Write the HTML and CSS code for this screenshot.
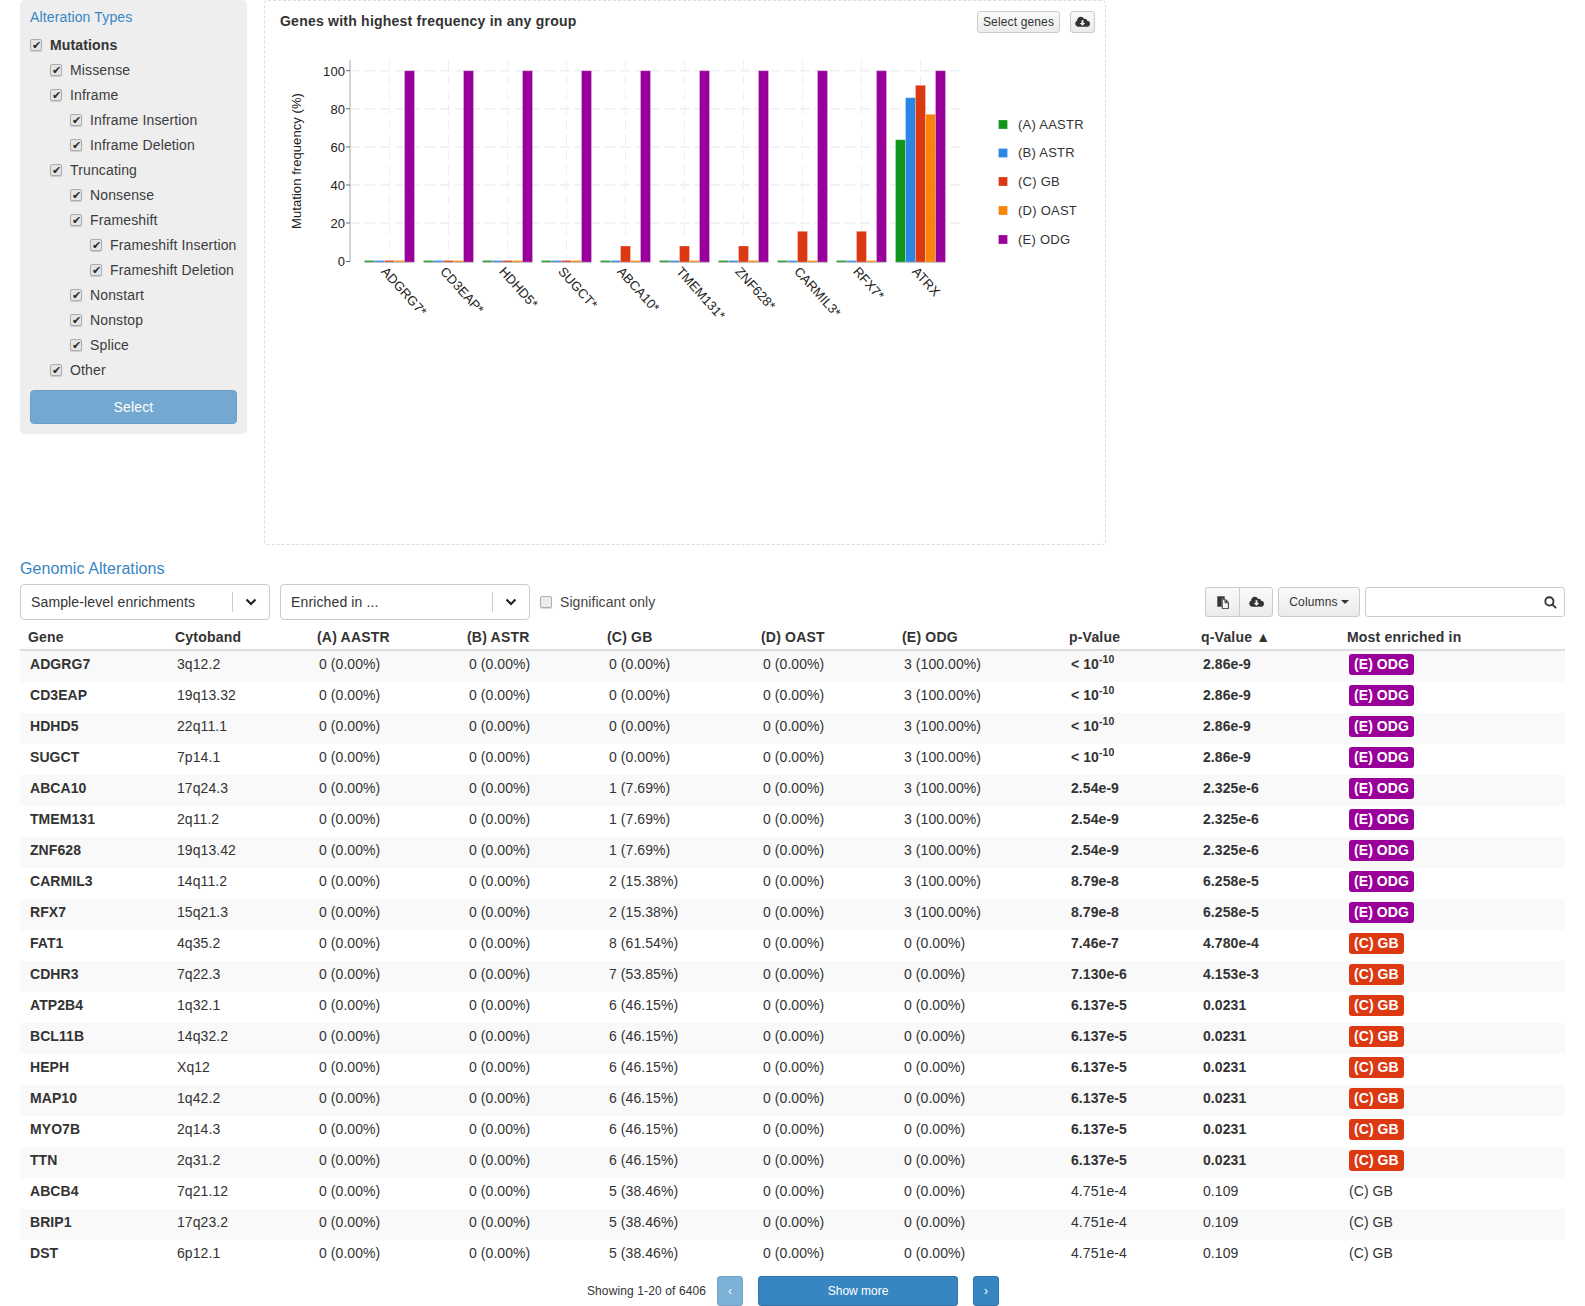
FILE: index.html
```html
<!DOCTYPE html>
<html lang="en">
<head>
    <meta charset="UTF-8">
    <title>Genomic Alterations</title>
    <link rel="stylesheet" href="styles.css">
</head>
<body>
    <div class="top">
        <div class="types">
            <div class="types-title">Alteration Types</div>
            <label class="type bold"><input type="checkbox" checked>Mutations</label>
            <label class="type lvl1"><input type="checkbox" checked>Missense</label>
            <label class="type lvl1"><input type="checkbox" checked>Inframe</label>
            <label class="type lvl2"><input type="checkbox" checked>Inframe Insertion</label>
            <label class="type lvl2"><input type="checkbox" checked>Inframe Deletion</label>
            <label class="type lvl1"><input type="checkbox" checked>Truncating</label>
            <label class="type lvl2"><input type="checkbox" checked>Nonsense</label>
            <label class="type lvl2"><input type="checkbox" checked>Frameshift</label>
            <label class="type lvl3"><input type="checkbox" checked>Frameshift Insertion</label>
            <label class="type lvl3"><input type="checkbox" checked>Frameshift Deletion</label>
            <label class="type lvl2"><input type="checkbox" checked>Nonstart</label>
            <label class="type lvl2"><input type="checkbox" checked>Nonstop</label>
            <label class="type lvl2"><input type="checkbox" checked>Splice</label>
            <label class="type lvl1"><input type="checkbox" checked>Other</label>
            <button class="select-btn">Select</button>
        </div>

        <div class="panel">
            <div class="panel-head">
                <h3>Genes with highest frequency in any group</h3>
                <div class="panel-tools">
                    <button class="btn btn-xs">Select genes</button>
                    <button class="btn btn-xs btn-icon">
                        <svg class="icon" viewBox="0 0 16 12"><path d="M6.2 0.5a4 4 0 0 1 3.6 2.2a2.4 2.4 0 0 1 3.1 1.9a3.2 3.2 0 0 1-0.4 6.4H3.4A3.3 3.3 0 0 1 2.2 4.7A4 4 0 0 1 6.2 0.5z"/><path class="icon-cut" d="M7 4h2v3h2l-3 3l-3-3h2z"/></svg>
                    </button>
                </div>
            </div>

            <!-- viewBox is in page coordinates so numbers can be read off the screenshot -->
            <svg class="chart" viewBox="265 44 838 300" width="838" height="300">
                <g class="grid">
                    <path d="M350 70.7H960M350 108.8H960M350 146.9H960M350 185H960M350 223H960"/>
                </g>
                <g class="grid-v">
                    <path d="M389.5 60V261M448.5 60V261M507.5 60V261M566.5 60V261M625.5 60V261M684.5 60V261M743.5 60V261M802.5 60V261M861.5 60V261M920.5 60V261"/>
                </g>
                <path class="axis" d="M350 60V262"/>
                <path class="tick" d="M346 70.7H350M346 108.8H350M346 146.9H350M346 185H350M346 223H350M346 261.5H350"/>
                <g class="y-labels">
                    <text x="345" y="75.5">100</text>
                    <text x="345" y="113.5">80</text>
                    <text x="345" y="151.5">60</text>
                    <text x="345" y="189.5">40</text>
                    <text x="345" y="227.5">20</text>
                    <text x="345" y="266">0</text>
                </g>
                <text class="y-title" transform="translate(300.5 161) rotate(-90)">Mutation frequency (%)</text>

                <path class="baseline" d="M364.5 262.2h50M423.5 262.2h50M482.5 262.2h50M541.5 262.2h50M600.5 262.2h50M659.5 262.2h50M718.5 262.2h50M777.5 262.2h50M836.5 262.2h50M895.5 262.2h50"/>

                <g transform="translate(364.5 0)"><rect class="a" y="260.5" width="10" height="1.5"/><rect class="b" x="10" y="260.5" width="10" height="1.5"/><rect class="c" x="20" y="260.5" width="10" height="1.5"/><rect class="d" x="30" y="260.5" width="10" height="1.5"/><rect class="e" x="40" y="70.7" width="10" height="191.3"/></g>
                <g transform="translate(423.5 0)"><rect class="a" y="260.5" width="10" height="1.5"/><rect class="b" x="10" y="260.5" width="10" height="1.5"/><rect class="c" x="20" y="260.5" width="10" height="1.5"/><rect class="d" x="30" y="260.5" width="10" height="1.5"/><rect class="e" x="40" y="70.7" width="10" height="191.3"/></g>
                <g transform="translate(482.5 0)"><rect class="a" y="260.5" width="10" height="1.5"/><rect class="b" x="10" y="260.5" width="10" height="1.5"/><rect class="c" x="20" y="260.5" width="10" height="1.5"/><rect class="d" x="30" y="260.5" width="10" height="1.5"/><rect class="e" x="40" y="70.7" width="10" height="191.3"/></g>
                <g transform="translate(541.5 0)"><rect class="a" y="260.5" width="10" height="1.5"/><rect class="b" x="10" y="260.5" width="10" height="1.5"/><rect class="c" x="20" y="260.5" width="10" height="1.5"/><rect class="d" x="30" y="260.5" width="10" height="1.5"/><rect class="e" x="40" y="70.7" width="10" height="191.3"/></g>
                <g transform="translate(600.5 0)"><rect class="a" y="260.5" width="10" height="1.5"/><rect class="b" x="10" y="260.5" width="10" height="1.5"/><rect class="c" x="20" y="246" width="10" height="16"/><rect class="d" x="30" y="260.5" width="10" height="1.5"/><rect class="e" x="40" y="70.7" width="10" height="191.3"/></g>
                <g transform="translate(659.5 0)"><rect class="a" y="260.5" width="10" height="1.5"/><rect class="b" x="10" y="260.5" width="10" height="1.5"/><rect class="c" x="20" y="246" width="10" height="16"/><rect class="d" x="30" y="260.5" width="10" height="1.5"/><rect class="e" x="40" y="70.7" width="10" height="191.3"/></g>
                <g transform="translate(718.5 0)"><rect class="a" y="260.5" width="10" height="1.5"/><rect class="b" x="10" y="260.5" width="10" height="1.5"/><rect class="c" x="20" y="246" width="10" height="16"/><rect class="d" x="30" y="260.5" width="10" height="1.5"/><rect class="e" x="40" y="70.7" width="10" height="191.3"/></g>
                <g transform="translate(777.5 0)"><rect class="a" y="260.5" width="10" height="1.5"/><rect class="b" x="10" y="260.5" width="10" height="1.5"/><rect class="c" x="20" y="231.3" width="10" height="30.7"/><rect class="d" x="30" y="260.5" width="10" height="1.5"/><rect class="e" x="40" y="70.7" width="10" height="191.3"/></g>
                <g transform="translate(836.5 0)"><rect class="a" y="260.5" width="10" height="1.5"/><rect class="b" x="10" y="260.5" width="10" height="1.5"/><rect class="c" x="20" y="231.3" width="10" height="30.7"/><rect class="d" x="30" y="260.5" width="10" height="1.5"/><rect class="e" x="40" y="70.7" width="10" height="191.3"/></g>
                <g transform="translate(895.5 0)"><rect class="a" y="139.7" width="10" height="122.3"/><rect class="b" x="10" y="97.7" width="10" height="164.3"/><rect class="c" x="20" y="85.3" width="10" height="176.7"/><rect class="d" x="30" y="114.3" width="10" height="147.7"/><rect class="e" x="40" y="70.7" width="10" height="191.3"/></g>

                <g class="x-labels">
                    <text transform="translate(380.5 272) rotate(48)">ADGRG7*</text>
                    <text transform="translate(439.5 272) rotate(48)">CD3EAP*</text>
                    <text transform="translate(498.5 272) rotate(48)">HDHD5*</text>
                    <text transform="translate(557.5 272) rotate(48)">SUGCT*</text>
                    <text transform="translate(616.5 272) rotate(48)">ABCA10*</text>
                    <text transform="translate(675.5 272) rotate(48)">TMEM131*</text>
                    <text transform="translate(734.5 272) rotate(48)">ZNF628*</text>
                    <text transform="translate(793.5 272) rotate(48)">CARMIL3*</text>
                    <text transform="translate(852.5 272) rotate(48)">RFX7*</text>
                    <text transform="translate(911.5 272) rotate(48)">ATRX</text>
                </g>

                <g class="legend">
                    <rect class="a" x="998.5" y="120" width="9" height="9"/><text x="1018" y="129">(A) AASTR</text>
                    <rect class="b" x="998.5" y="148.5" width="9" height="9"/><text x="1018" y="157">(B) ASTR</text>
                    <rect class="c" x="998.5" y="177" width="9" height="9"/><text x="1018" y="186">(C) GB</text>
                    <rect class="d" x="998.5" y="206" width="9" height="9"/><text x="1018" y="215">(D) OAST</text>
                    <rect class="e" x="998.5" y="235" width="9" height="9"/><text x="1018" y="244">(E) ODG</text>
                </g>
            </svg>
        </div>
    </div>

    <h2 class="section-title">Genomic Alterations</h2>

    <div class="toolbar">
        <div class="select-box">
            <span class="select-text">Sample-level enrichments</span>
            <span class="select-sep"></span>
            <svg class="chevron" viewBox="0 0 12 8"><path d="M1.5 1.5L6 6l4.5-4.5"/></svg>
        </div>
        <div class="select-box">
            <span class="select-text">Enriched in ...</span>
            <span class="select-sep"></span>
            <svg class="chevron" viewBox="0 0 12 8"><path d="M1.5 1.5L6 6l4.5-4.5"/></svg>
        </div>
        <label class="sig-only"><input type="checkbox">Significant only</label>

        <div class="table-tools">
            <div class="btn-group">
                <button class="btn btn-sm">
                    <svg class="icon-copy" viewBox="0 0 12 13"><path d="M0.5 0.5H7.5V2.5H4.5V10.5H0.5z"/><path d="M5.2 3.3H8V6.7H11.4V12.7H5.2z"/><path d="M8.9 3.4L11.3 5.8H8.9z"/></svg>
                </button>
                <button class="btn btn-sm">
                    <svg class="icon" viewBox="0 0 16 12"><path d="M6.2 0.5a4 4 0 0 1 3.6 2.2a2.4 2.4 0 0 1 3.1 1.9a3.2 3.2 0 0 1-0.4 6.4H3.4A3.3 3.3 0 0 1 2.2 4.7A4 4 0 0 1 6.2 0.5z"/><path class="icon-cut" d="M7 4h2v3h2l-3 3l-3-3h2z"/></svg>
                </button>
            </div>
            <button class="btn btn-sm btn-columns">Columns <span class="caret"></span></button>
            <div class="search">
                <input type="text">
                <svg class="search-icon" viewBox="0 0 14 14"><circle cx="5.8" cy="5.8" r="4.4"/><path d="M9 9l4 4"/></svg>
            </div>
        </div>
    </div>

    <table class="data">
        <colgroup>
            <col class="w-gene"><col class="w-cyto"><col class="w-a"><col class="w-b"><col class="w-c"><col class="w-d"><col class="w-e"><col class="w-p"><col class="w-q"><col class="w-most">
        </colgroup>
        <thead>
            <tr><th>Gene</th><th>Cytoband</th><th>(A) AASTR</th><th>(B) ASTR</th><th>(C) GB</th><th>(D) OAST</th><th>(E) ODG</th><th>p-Value</th><th>q-Value &#9650;</th><th>Most enriched in</th></tr>
        </thead>
        <tbody>
            <tr><td class="b">ADGRG7</td><td>3q12.2</td><td>0 (0.00%)</td><td>0 (0.00%)</td><td>0 (0.00%)</td><td>0 (0.00%)</td><td>3 (100.00%)</td><td class="b">&lt; 10<sup>-10</sup></td><td class="b">2.86e-9</td><td><span class="tag odg">(E) ODG</span></td></tr>
            <tr><td class="b">CD3EAP</td><td>19q13.32</td><td>0 (0.00%)</td><td>0 (0.00%)</td><td>0 (0.00%)</td><td>0 (0.00%)</td><td>3 (100.00%)</td><td class="b">&lt; 10<sup>-10</sup></td><td class="b">2.86e-9</td><td><span class="tag odg">(E) ODG</span></td></tr>
            <tr><td class="b">HDHD5</td><td>22q11.1</td><td>0 (0.00%)</td><td>0 (0.00%)</td><td>0 (0.00%)</td><td>0 (0.00%)</td><td>3 (100.00%)</td><td class="b">&lt; 10<sup>-10</sup></td><td class="b">2.86e-9</td><td><span class="tag odg">(E) ODG</span></td></tr>
            <tr><td class="b">SUGCT</td><td>7p14.1</td><td>0 (0.00%)</td><td>0 (0.00%)</td><td>0 (0.00%)</td><td>0 (0.00%)</td><td>3 (100.00%)</td><td class="b">&lt; 10<sup>-10</sup></td><td class="b">2.86e-9</td><td><span class="tag odg">(E) ODG</span></td></tr>
            <tr><td class="b">ABCA10</td><td>17q24.3</td><td>0 (0.00%)</td><td>0 (0.00%)</td><td>1 (7.69%)</td><td>0 (0.00%)</td><td>3 (100.00%)</td><td class="b">2.54e-9</td><td class="b">2.325e-6</td><td><span class="tag odg">(E) ODG</span></td></tr>
            <tr><td class="b">TMEM131</td><td>2q11.2</td><td>0 (0.00%)</td><td>0 (0.00%)</td><td>1 (7.69%)</td><td>0 (0.00%)</td><td>3 (100.00%)</td><td class="b">2.54e-9</td><td class="b">2.325e-6</td><td><span class="tag odg">(E) ODG</span></td></tr>
            <tr><td class="b">ZNF628</td><td>19q13.42</td><td>0 (0.00%)</td><td>0 (0.00%)</td><td>1 (7.69%)</td><td>0 (0.00%)</td><td>3 (100.00%)</td><td class="b">2.54e-9</td><td class="b">2.325e-6</td><td><span class="tag odg">(E) ODG</span></td></tr>
            <tr><td class="b">CARMIL3</td><td>14q11.2</td><td>0 (0.00%)</td><td>0 (0.00%)</td><td>2 (15.38%)</td><td>0 (0.00%)</td><td>3 (100.00%)</td><td class="b">8.79e-8</td><td class="b">6.258e-5</td><td><span class="tag odg">(E) ODG</span></td></tr>
            <tr><td class="b">RFX7</td><td>15q21.3</td><td>0 (0.00%)</td><td>0 (0.00%)</td><td>2 (15.38%)</td><td>0 (0.00%)</td><td>3 (100.00%)</td><td class="b">8.79e-8</td><td class="b">6.258e-5</td><td><span class="tag odg">(E) ODG</span></td></tr>
            <tr><td class="b">FAT1</td><td>4q35.2</td><td>0 (0.00%)</td><td>0 (0.00%)</td><td>8 (61.54%)</td><td>0 (0.00%)</td><td>0 (0.00%)</td><td class="b">7.46e-7</td><td class="b">4.780e-4</td><td><span class="tag gb">(C) GB</span></td></tr>
            <tr><td class="b">CDHR3</td><td>7q22.3</td><td>0 (0.00%)</td><td>0 (0.00%)</td><td>7 (53.85%)</td><td>0 (0.00%)</td><td>0 (0.00%)</td><td class="b">7.130e-6</td><td class="b">4.153e-3</td><td><span class="tag gb">(C) GB</span></td></tr>
            <tr><td class="b">ATP2B4</td><td>1q32.1</td><td>0 (0.00%)</td><td>0 (0.00%)</td><td>6 (46.15%)</td><td>0 (0.00%)</td><td>0 (0.00%)</td><td class="b">6.137e-5</td><td class="b">0.0231</td><td><span class="tag gb">(C) GB</span></td></tr>
            <tr><td class="b">BCL11B</td><td>14q32.2</td><td>0 (0.00%)</td><td>0 (0.00%)</td><td>6 (46.15%)</td><td>0 (0.00%)</td><td>0 (0.00%)</td><td class="b">6.137e-5</td><td class="b">0.0231</td><td><span class="tag gb">(C) GB</span></td></tr>
            <tr><td class="b">HEPH</td><td>Xq12</td><td>0 (0.00%)</td><td>0 (0.00%)</td><td>6 (46.15%)</td><td>0 (0.00%)</td><td>0 (0.00%)</td><td class="b">6.137e-5</td><td class="b">0.0231</td><td><span class="tag gb">(C) GB</span></td></tr>
            <tr><td class="b">MAP10</td><td>1q42.2</td><td>0 (0.00%)</td><td>0 (0.00%)</td><td>6 (46.15%)</td><td>0 (0.00%)</td><td>0 (0.00%)</td><td class="b">6.137e-5</td><td class="b">0.0231</td><td><span class="tag gb">(C) GB</span></td></tr>
            <tr><td class="b">MYO7B</td><td>2q14.3</td><td>0 (0.00%)</td><td>0 (0.00%)</td><td>6 (46.15%)</td><td>0 (0.00%)</td><td>0 (0.00%)</td><td class="b">6.137e-5</td><td class="b">0.0231</td><td><span class="tag gb">(C) GB</span></td></tr>
            <tr><td class="b">TTN</td><td>2q31.2</td><td>0 (0.00%)</td><td>0 (0.00%)</td><td>6 (46.15%)</td><td>0 (0.00%)</td><td>0 (0.00%)</td><td class="b">6.137e-5</td><td class="b">0.0231</td><td><span class="tag gb">(C) GB</span></td></tr>
            <tr><td class="b">ABCB4</td><td>7q21.12</td><td>0 (0.00%)</td><td>0 (0.00%)</td><td>5 (38.46%)</td><td>0 (0.00%)</td><td>0 (0.00%)</td><td>4.751e-4</td><td>0.109</td><td>(C) GB</td></tr>
            <tr><td class="b">BRIP1</td><td>17q23.2</td><td>0 (0.00%)</td><td>0 (0.00%)</td><td>5 (38.46%)</td><td>0 (0.00%)</td><td>0 (0.00%)</td><td>4.751e-4</td><td>0.109</td><td>(C) GB</td></tr>
            <tr><td class="b">DST</td><td>6p12.1</td><td>0 (0.00%)</td><td>0 (0.00%)</td><td>5 (38.46%)</td><td>0 (0.00%)</td><td>0 (0.00%)</td><td>4.751e-4</td><td>0.109</td><td>(C) GB</td></tr>
        </tbody>
    </table>

    <div class="pager">
        <span class="pager-text">Showing 1-20 of 6406</span>
        <button class="page-btn off">&#8249;</button>
        <button class="page-btn more">Show more</button>
        <button class="page-btn">&#8250;</button>
    </div>
</body>
</html>
```

FILE: styles.css
```css
html, body {
    margin: 0;
    padding: 0;
}
body {
    width: 1545px;
    height: 1306px;
    padding-left: 20px;
    overflow: hidden;
    font-family: "Liberation Sans", Arial, sans-serif;
    font-size: 14px;
    letter-spacing: .07px;
    color: #333;
    background-color: #fff;
}
.top {
    display: flex;
    gap: 17px;
    height: 545px;
}

/* alteration types */
.types {
    width: 207px;
    height: 434px;
    padding: 0 10px;
    background-color: #eee;
    border-radius: 5px;
    letter-spacing: .14px;
}
.types-title {
    height: 32px;
    line-height: 35px;
    color: #3786c2;
    font-size: 14px;
}
.type {
    display: flex;
    align-items: center;
    height: 25px;
    color: #3c3c3c;
}
.type.bold {
    font-weight: bold;
    color: #333;
}
.lvl1 { padding-left: 20px; }
.lvl2 { padding-left: 40px; }
.lvl3 { padding-left: 60px; }
input[type="checkbox"] {
    appearance: none;
    position: relative;
    flex: none;
    width: 12px;
    height: 12px;
    margin: 0 8px 0 0;
    border: 1px solid #adadad;
    border-radius: 2px;
    background-color: #e4e4e4;
    box-shadow: 0 1px 1px rgba(0,0,0,.15);
}
input[type="checkbox"]:not(:checked) {
    background-color: #ececec;
}
input[type="checkbox"]:checked::after {
    content: "\2714";
    position: absolute;
    left: 1px;
    top: -1px;
    font: bold 11px/13px "DejaVu Sans", sans-serif;
    color: #2a2a2a;
}
.select-btn {
    display: block;
    width: 207px;
    height: 34px;
    margin-top: 8px;
    border: 1px solid #6a9fc8;
    border-radius: 4px;
    background-color: #74a8d1;
    color: #fff;
    font-family: inherit;
    font-size: 14px;
    letter-spacing: .14px;
}

/* chart panel */
.panel {
    width: 840px;
    height: 543px;
    border: 1px dashed #ddd;
    border-radius: 4px;
}
.panel-head {
    display: flex;
    justify-content: space-between;
    height: 43px;
    padding: 10px 10px 0 15px;
    box-sizing: border-box;
}
.panel-head h3 {
    margin: 0;
    font-size: 14px;
    line-height: 20px;
    letter-spacing: .23px;
}
.panel-tools {
    display: flex;
    gap: 10px;
}
.chart {
    display: block;
}
.grid path {
    fill: none;
    stroke: #eef0f4;
    stroke-width: 1.5;
    stroke-dasharray: 10 5;
}
.grid-v path {
    fill: none;
    stroke: #eef0f4;
    stroke-dasharray: 10 5;
}
.axis {
    stroke: #d4d4d4;
    stroke-width: 2;
}
.tick {
    stroke: #666;
}
.baseline {
    stroke: #999;
    fill: none;
}
.chart text {
    font-size: 13px;
    fill: #222;
}
.legend text {
    letter-spacing: .25px;
    fill: #333;
}
.y-labels text {
    text-anchor: end;
}
.y-title {
    text-anchor: middle;
    fill: #333;
}
.chart rect {
    stroke-width: 1;
    stroke-opacity: .25;
    stroke: #fff;
}
rect.a { fill: #109618; }
rect.b { fill: #2986e2; }
rect.c { fill: #dc3912; }
rect.d { fill: #f88508; }
rect.e { fill: #990099; }

/* buttons */
.btn {
    border: 1px solid #ccc;
    border-radius: 3px;
    background: linear-gradient(#fafafa, #ebebeb);
    color: #333;
    font-family: inherit;
    padding: 0;
    display: flex;
    align-items: center;
    justify-content: center;
    letter-spacing: .15px;
}
.btn-xs {
    height: 22px;
    width: 83px;
    font-size: 12px;
}
.btn-icon {
    width: 25px;
}
.btn-sm {
    height: 30px;
    width: 34px;
    font-size: 12px;
}
.icon {
    width: 15px;
    height: 12px;
    fill: #333;
}
.icon-copy {
    width: 12px;
    height: 13px;
    fill: #333;
    stroke: #333;
    stroke-width: .4;
}
.icon-copy path:nth-child(2) {
    fill: #f4f4f4;
    stroke-width: 1;
}
.icon-cut {
    fill: #f3f3f3;
}

/* table toolbar */
.section-title {
    margin: 14px 0 0;
    font-size: 16px;
    font-weight: normal;
    line-height: 19px;
    color: #3786c2;
}
.toolbar {
    display: flex;
    align-items: center;
    gap: 10px;
    height: 36px;
    margin-top: 6px;
}
.select-box {
    display: flex;
    align-items: center;
    width: 248px;
    height: 34px;
    border: 1px solid #ccc;
    border-radius: 4px;
    letter-spacing: .13px;
}
.select-text {
    flex: 1;
    padding-left: 10px;
}
.select-sep {
    width: 1px;
    height: 20px;
    background-color: #ccc;
}
.chevron {
    width: 12px;
    height: 8px;
    margin: 0 12px;
    fill: none;
    stroke: #222;
    stroke-width: 2.2;
}
.sig-only {
    display: flex;
    align-items: center;
    color: #444;
}
.table-tools {
    display: flex;
    gap: 5px;
    margin-left: auto;
}
.btn-group {
    display: flex;
}
.btn-group .btn:first-child {
    border-radius: 3px 0 0 3px;
    border-right: 0;
}
.btn-group .btn:last-child {
    border-radius: 0 3px 3px 0;
}
.btn-columns {
    width: 82px;
}
.caret {
    display: inline-block;
    margin-left: 3px;
    border-top: 4px solid #333;
    border-left: 4px solid transparent;
    border-right: 4px solid transparent;
}
.search {
    position: relative;
    width: 200px;
    height: 30px;
}
.search input {
    width: 100%;
    height: 100%;
    box-sizing: border-box;
    border: 1px solid #ccc;
    border-radius: 3px;
}
.search-icon {
    position: absolute;
    right: 8px;
    top: 9px;
    width: 13px;
    height: 13px;
    fill: none;
    stroke: #333;
    stroke-width: 2;
}

/* table */
.data {
    table-layout: fixed;
    width: 1545px;
    border-collapse: separate;
    border-spacing: 0;
}
.w-gene { width: 147px; }
.w-cyto { width: 142px; }
.w-a { width: 150px; }
.w-b { width: 140px; }
.w-c { width: 154px; }
.w-d { width: 141px; }
.w-e { width: 167px; }
.w-p { width: 132px; }
.w-q { width: 146px; }
.w-most { width: 226px; }
th {
    height: 25px;
    padding: 4px 8px 0;
    text-align: left;
    border-bottom: 2px solid #ddd;
    letter-spacing: .2px;
}
td {
    height: 25px;
    padding: 0 10px 6px;
    line-height: 20px;
}
tbody tr:nth-child(odd) {
    background-color: #f9f9f9;
}
td.b {
    font-weight: bold;
}
sup {
    font-size: 10.5px;
    line-height: 0;
}
.tag {
    display: inline-block;
    height: 21px;
    line-height: 21px;
    padding: 0 5px;
    border-radius: 3px;
    color: #fff;
    font-weight: bold;
    vertical-align: -1px;
}
.odg { background-color: #990099; }
.gb { background-color: #dc3912; }

/* pager */
.pager {
    display: flex;
    align-items: center;
    justify-content: center;
    gap: 15px;
    width: 1585px;
    margin-left: -20px;
    padding-left: 1px;
    height: 30px;
    margin-top: 5px;
    box-sizing: border-box;
}
.pager-text {
    font-size: 12px;
    letter-spacing: .12px;
    margin-right: -4px;
}
.page-btn {
    width: 26px;
    height: 30px;
    padding: 0;
    border: 1px solid #2e76ad;
    border-radius: 3px;
    background-color: #3786c2;
    color: #fff;
    font-family: inherit;
    font-size: 12px;
}
.page-btn.off {
    opacity: .65;
}
.page-btn.more {
    width: 200px;
}
```
